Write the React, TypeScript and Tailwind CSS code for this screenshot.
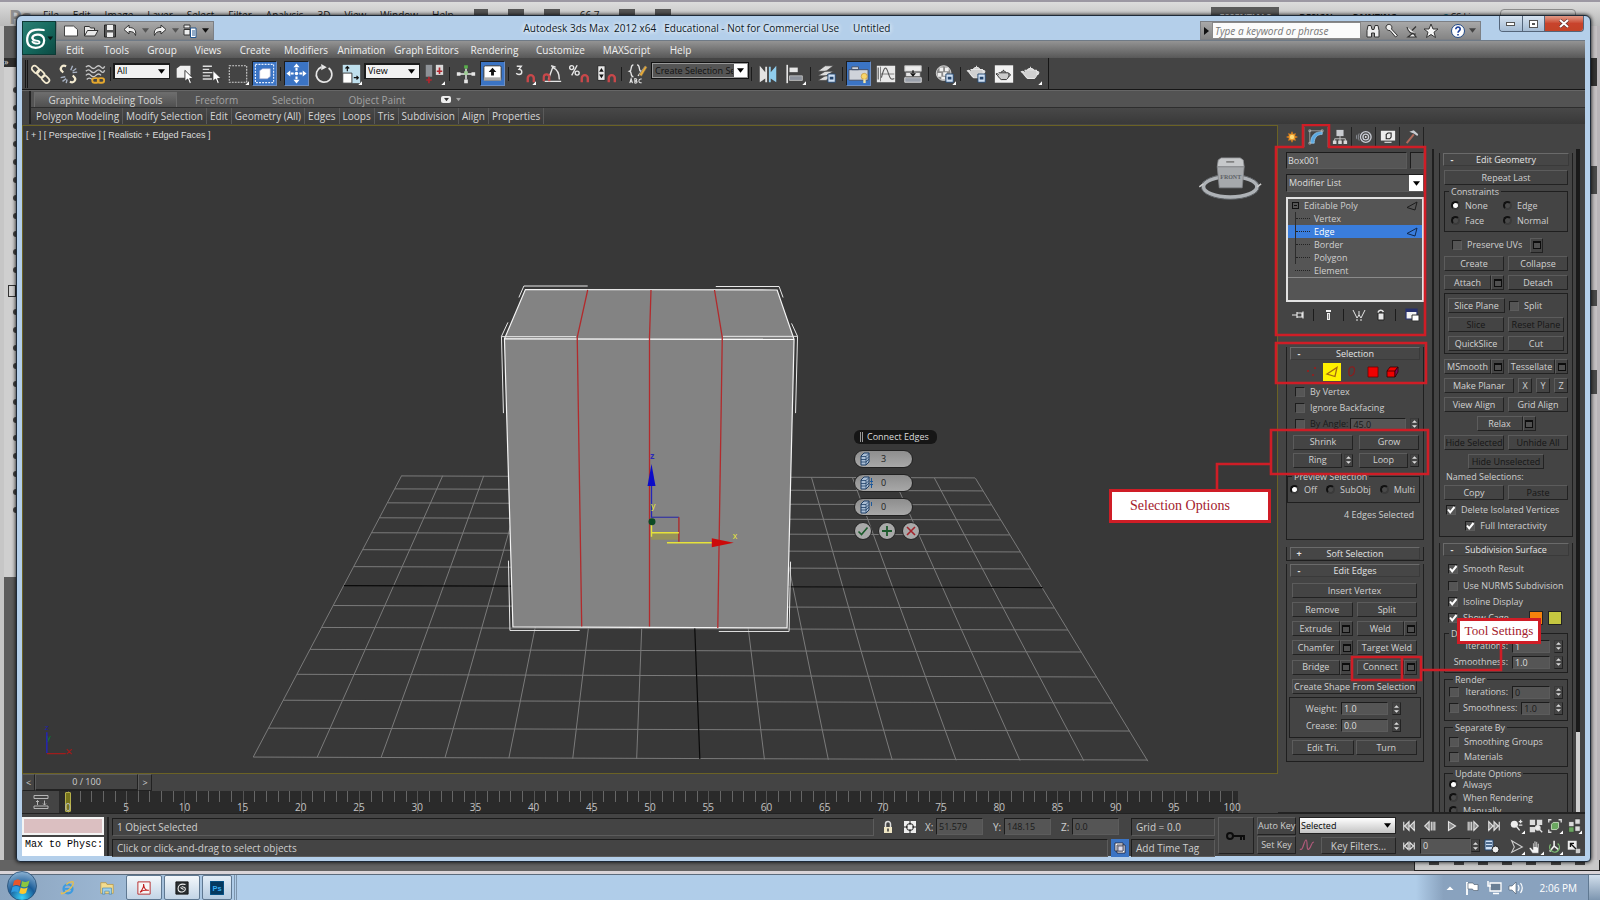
import React from "react";

type Kids = { children?: React.ReactNode; className?: string };

/* ---------- small building blocks ---------- */

function Ico({ children, className = "size-6", box = "0 0 24 24" }: Kids & { box?: string }) {
  return (
    <svg viewBox={box} className={"shrink-0 " + className} fill="none" stroke="#e6e6e6" strokeWidth="1.5" aria-hidden="true">
      {children}
    </svg>
  );
}

function ToolBtn({ label, active, flyout, children }: Kids & { label: string; active?: boolean; flyout?: boolean }) {
  return (
    <button aria-label={label} className="flex h-7 w-[27px] shrink-0 items-center justify-center">
      <span className={active ? "flex size-[25px] items-center justify-center border border-t-[#1d1d1d] border-l-[#1d1d1d] border-r-[#6d8fc4] border-b-[#6d8fc4] bg-[#3b74c4]" : "flex size-[25px] items-center justify-center"}>
        <Ico className={active ? "size-[23px]" : "size-[22px]"}>
          {children}
          {flyout && <path d="M20 24l4-4v4z" fill="#fff" stroke="none" />}
        </Ico>
      </span>
    </button>
  );
}

function Sep() {
  return <span className="mx-[2px] h-3.5 w-px shrink-0 bg-[#1c1c1c]" />;
}

function Caret({ className = "" }: Kids) {
  return (
    <svg viewBox="0 0 8 5" className={"pointer-events-none h-[5px] w-[7px] " + className} aria-hidden="true">
      <path d="M0 0h8L4 5z" fill="currentColor" />
    </svg>
  );
}

function BarSelect({ label, value, className }: { label: string; value: string; className: string }) {
  return (
    <span className={"relative mb-1.5 block h-4 shrink-0 border border-t-2 border-l-2 border-[#1b1b1b] bg-[#f1f1f1] text-black " + className}>
      <select aria-label={label} className="block h-full w-full appearance-none bg-transparent pl-0.5 text-[9px] leading-3 outline-none">
        <option>{value}</option>
      </select>
      <Caret className="absolute top-1 right-1" />
    </span>
  );
}

const raised = "border border-t-[#5c5c5c] border-l-[#5c5c5c] border-r-[#222] border-b-[#222] bg-[#444]";
const sunken = "border border-t-[#1c1c1c] border-l-[#1c1c1c] border-r-[#5c5c5c] border-b-[#5c5c5c] bg-[#555]";

function Btn({ children, className = "flex-1", off }: Kids & { off?: boolean }) {
  return (
    <button disabled={off} className={"h-[15px] min-w-0 text-center leading-3 whitespace-nowrap " + raised + (off ? " text-[#161616] " : " text-[#d2d2d2] ") + className}>
      {children}
    </button>
  );
}

function Opt({ label }: { label: string }) {
  return (
    <button aria-label={label} className={"flex h-[15px] w-[13px] shrink-0 items-center justify-center " + raised}>
      <span className="h-2 w-2 border border-t-2 border-[#0d0d0d] bg-[#505050]" />
    </button>
  );
}

function Spin({ className = "" }: Kids) {
  return (
    <span className={"flex h-[13px] w-[9px] shrink-0 flex-col items-center justify-center gap-[2px] border border-[#3a3a3a] border-r-[#222] border-b-[#222] text-[#ddd] " + className}>
      <svg viewBox="0 0 6 3" className="h-[3px] w-[5px]" aria-hidden="true"><path d="M0 3h6L3 0z" fill="currentColor" /></svg>
      <svg viewBox="0 0 6 3" className="h-[3px] w-[5px]" aria-hidden="true"><path d="M0 0h6L3 3z" fill="currentColor" /></svg>
    </span>
  );
}

function Num({ label, value, className = "w-[38px]", off, id }: { label?: string; value: string; className?: string; off?: boolean; id?: string }) {
  return (
    <input id={id} aria-label={label} defaultValue={value} className={"h-[13px] min-w-0 pl-0.5 text-[9px] leading-3 outline-none " + sunken + (off ? " text-[#1a1a1a] " : " text-[#dedede] ") + className} />
  );
}

function Check({ label, on, dim, className = "" }: { label: string; on?: boolean; dim?: boolean; className?: string }) {
  return (
    <label className={"flex items-center gap-[5px] whitespace-nowrap " + (dim ? "text-[#1a1a1a] " : "") + className}>
      <span className="relative block size-[10px] shrink-0">
        <input type="checkbox" defaultChecked={on} className={"peer block size-[10px] appearance-none " + sunken} />
        <svg viewBox="0 0 10 10" className="pointer-events-none absolute inset-0 hidden size-[10px] peer-checked:block" aria-hidden="true">
          <path d="M2 4.500l2.200 2.800L8.500 2" stroke="#fff" strokeWidth="2" fill="none" />
        </svg>
      </span>
      {label}
    </label>
  );
}

function Radio({ label, name, on, className = "" }: { label: string; name: string; on?: boolean; className?: string }) {
  return (
    <label className={"flex items-center gap-[5px] whitespace-nowrap " + className}>
      <input type="radio" name={name} defaultChecked={on} className="block size-[9px] shrink-0 appearance-none rounded-full border-2 border-t-[#111] border-l-[#111] border-r-[#3a3a3a] border-b-[#3a3a3a] bg-[#4a4a4a] checked:bg-white" />
      {label}
    </label>
  );
}

function Row({ children, className = "h-[19px] gap-1" }: Kids) {
  return <div className={"flex items-center " + className}>{children}</div>;
}

function Rollout({ title, sign = "-", children, className = "" }: Kids & { title: string; sign?: string }) {
  return (
    <section className={"border border-t-0 border-[#1f1f1f] " + className}>
      <button className="mx-[3px] flex h-[13px] w-[calc(100%-6px)] items-center border border-[#6a6a6a] border-r-[#3a3a3a] border-b-[#3a3a3a] bg-[#464646] px-1 text-[9px] leading-3 text-[#e4e4e4]">
        <span className="w-2 font-bold">{sign}</span>
        <span className="flex-1 pr-2 text-center">{title}</span>
      </button>
      {children}
    </section>
  );
}

function Group({ title, children, className = "" }: Kids & { title?: string }) {
  return (
    <fieldset className={"min-w-0 border border-[#1f1f1f] " + className}>
      {title && <legend className="ml-1 h-[9px] px-0.5 leading-[9px]">{title}</legend>}
      {children}
    </fieldset>
  );
}

/* ---------- back window ---------- */

const psMenus = ["File", "Edit", "Image", "Layer", "Select", "Filter", "Analysis", "3D", "View", "Window", "Help"];

function BackWindow() {
  return (
    <div className="absolute inset-0 flex flex-col overflow-hidden border-t-2 border-[#9c98a3] bg-[#636363] text-[#222]">
      <div className="flex h-6 shrink-0 items-start bg-linear-to-b from-[#dcdcdc] to-[#b9b9b9] pt-[7px] pl-[9px] text-[10px] leading-3">
        <span className="-mt-0.5 w-[34px] text-[20px] leading-5 font-bold text-[#8e8e8e]">Ps</span>
        <div className="flex gap-[14px]">
          {psMenus.map((m) => <span key={m}>{m}</span>)}
        </div>
        <div className="ml-5 flex gap-5">
          <span className="h-3 w-3.5 bg-[#555]" />
          <span className="h-3 w-4 bg-[#555]" />
          <span className="h-3 w-4 bg-[#555]" />
          <span>66.7</span>
          <span className="h-3 w-4 bg-[#555]" />
          <span className="h-3 w-4 bg-[#555]" />
        </div>
        <div className="mr-6 ml-auto flex gap-5 font-bold">
          <span className="-mt-0.5 h-4 bg-[#5a5a5a] px-2 text-[9px] leading-5 text-[#eee]">ESSENTIALS</span>
          <span className="text-[9px] leading-4">DESIGN</span>
          <span className="text-[9px] leading-4">PAINTING</span>
          <span className="text-[9px] leading-4">»</span>
          <span className="text-[9px] leading-4 font-normal"><b className="text-[#1e7f96]">C</b> CS Live</span>
          <span className="h-4 w-[76px] rounded border border-[#8a8a8a]" />
        </div>
      </div>
      <div className="flex min-h-0 flex-1">
        <div className="flex w-4 shrink-0 flex-col border-l-4 border-[#c6c6c6] bg-[#5d5d5d]">
          <div className="mt-8 h-[9px] bg-[#2e2e2e] text-[9px] leading-[8px] text-[#ddd]">»</div>
          <div className="flex h-[510px] flex-col items-end gap-3 overflow-hidden bg-[#cfcfcf] pt-5">
            {Array.from({ length: 24 }, (_, i) => (
              <span key={i} className={i === 11 ? "h-3 w-2 shrink-0 border border-[#333]" : "h-1.5 w-[3px] shrink-0 rounded-l bg-[#444]"} />
            ))}
          </div>
        </div>
        <div className="flex-1" />
        <div className="flex w-[9px] shrink-0 flex-col border-r-[3px] border-[#b9b5b8] bg-[#c4c0c2]">
          <div className="mt-8 h-7 bg-[#333]" />
          <div className="mt-20 h-7 bg-[#4a4a4a]" />
          <div className="mt-24 h-4 bg-[#4a4a4a]" />
          <div className="mt-16 h-6 bg-[#4a4a4a]" />
        </div>
      </div>
      <div className="ml-auto flex h-[11px] w-[186px] shrink-0 items-center justify-evenly border-x border-b border-[#222] bg-[#c9c9c9] pb-1">
        {[0, 1, 2, 3, 4, 5, 6].map((i) => <span key={i} className="h-1 w-2.5 bg-[#444]" />)}
      </div>
      <div className="h-[3px] shrink-0 bg-[#d9d4d8]" />
    </div>
  );
}

/* ---------- title, menu ---------- */

function AppLogo() {
  return (
    <button aria-label="Application menu" className="absolute top-[5px] left-[5px] z-10 flex h-[34px] w-[34px] items-center justify-center border border-[#0d3a35] bg-linear-to-br from-[#2c7f74] via-[#156a5f] to-[#0d4a43]">
      <svg viewBox="0 0 34 34" className="size-[34px]" fill="none" stroke="#fff" strokeWidth="2.4" aria-hidden="true">
        <path d="M22 8.500C12 7 5.500 9 4.500 17c-.8 8 4 10.500 9 10.500 6 0 9-3.500 9-8 0-4.500-4-6.500-7.500-6-3 .4-5 1.500-5 3.500" strokeLinecap="round" />
        <path d="M10 17c.5 3.500 3.500 2.500 6 3 2.500.6 2 3-.5 3-2.500 0-4.500-.5-5.500-2" strokeWidth="2" strokeLinecap="round" />
        <path d="M26 15.500h6l-3 4z" fill="#0a1614" stroke="none" />
      </svg>
    </button>
  );
}

function TitleBar() {
  return (
    <div className="relative flex h-6 shrink-0 text-[10px]">
      <div className="mt-[5px] ml-[34px] flex h-[19px] w-[158px] items-center justify-between border border-[#7c7f84] bg-linear-to-b from-[#a8a8a8] to-[#858585] pr-1 pl-1.5">
        <Ico className="size-4" box="0 0 16 16"><path d="M1.500 3h9l4 3.500V13h-13z" fill="#fff" stroke="#444" strokeWidth="1" /></Ico>
        <Ico className="size-4" box="0 0 16 16"><path d="M1.500 13V3.500h5l1 1.500h4v2.500M1.500 13l3-5.500H15L12 13z" fill="#e8e8e8" stroke="#333" strokeWidth="1" /></Ico>
        <Ico className="size-4" box="0 0 16 16"><path d="M2.500 2h11v12h-11z" fill="#555" stroke="#222" strokeWidth="1" /><path d="M5 2h6v5H5zM5 9.500h6V14H5z" fill="#eee" stroke="none" /></Ico>
        <Ico className="size-4" box="0 0 16 16"><path d="M2 6.500L7 2v2.500c5 0 7.500 2.500 6.500 8-1-3-2.500-4-6.500-4V11z" fill="#f0f0f0" stroke="#333" strokeWidth="1" /></Ico>
        <Caret className="text-[#555]" />
        <Ico className="size-4" box="0 0 16 16"><path d="M14 6.500L9 2v2.500c-5 0-7.500 2.500-6.500 8 1-3 2.500-4 6.500-4V11z" fill="#f0f0f0" stroke="#333" strokeWidth="1" /></Ico>
        <Caret className="text-[#555]" />
        <Ico className="size-4" box="0 0 16 16"><path d="M2 2h6v3H2zM2 6.500h6V12H2z" fill="#eee" stroke="#333" strokeWidth="1" /><path d="M8.500 5H14v9.500H8.500z" fill="#fff" stroke="#24568f" strokeWidth="1" /><path d="M10 8h3M10 10h3M10 12h3" stroke="#24568f" strokeWidth="1" /></Ico>
        <Caret className="text-[#111]" />
      </div>
      <h1 className="flex flex-1 items-center justify-center gap-[14px] text-[10px] whitespace-nowrap text-[#0d1a28] [text-shadow:0_0_5px_#fff,0_0_5px_#fff]">
        <span>Autodesk 3ds Max&nbsp; 2012 x64</span>
        <span className="-ml-1.5">Educational - Not for Commercial Use</span>
        <span>Untitled</span>
      </h1>
      <div className="mt-[5px] flex h-[19px] w-[281px] items-center border border-[#7c7f84] bg-linear-to-b from-[#a8a8a8] to-[#858585]">
        <svg viewBox="0 0 5 8" className="mx-[3px] h-2 w-[5px]" aria-hidden="true"><path d="M0 0l5 4-5 4z" fill="#111" /></svg>
        <input aria-label="Search" placeholder="Type a keyword or phrase" className="h-[17px] w-[149px] border border-[#888] bg-[#fbfbfb] px-0.5 text-[10px] italic outline-none placeholder:text-[#777]" />
        <div className="flex flex-1 items-center justify-between pr-1 pl-1">
          <Ico className="size-4" box="0 0 16 16"><path d="M3 2.500h3l1 4h2l1-4h3l1 5V14h-4.500v-4h-3v4H2V7.500z" fill="#eee" stroke="#333" strokeWidth="1" /></Ico>
          <Ico className="size-4" box="0 0 16 16"><path d="M3 2c3-2 6 1 4.500 4l6 6.500-2 1.500L6 7.500C3 8 .5 4.500 3 2z" fill="#eee" stroke="#333" strokeWidth="1" /></Ico>
          <Ico className="size-4" box="0 0 16 16"><path d="M3 4c1 5 4 7 9 7M8 7.500l4-4M4 14h8l-3-4z" fill="#eee" stroke="#333" strokeWidth="1.200" /></Ico>
          <Ico className="size-4" box="0 0 16 16"><path d="M8 1l2 5h5l-4 3.200 1.500 5.300L8 11.500l-4.500 3L5 9.200 1 6h5z" fill="#f4f4f4" stroke="#333" strokeWidth="1" /></Ico>
          <span className="w-1" />
          <Ico className="size-4" box="0 0 16 16"><circle cx="8" cy="8" r="6.500" fill="#fff" stroke="#234a86" strokeWidth="1" /><path d="M5.800 6.200c0-3 4.600-2.700 4.400 0C10 8 8 7.800 8 9.800M8 11v1.600" stroke="#1b3f9a" strokeWidth="1.600" /></Ico>
          <Caret className="text-[#444]" />
        </div>
      </div>
      <div className="mr-[1px] ml-[18px] flex h-4 w-[85px] overflow-hidden rounded-b-[4px] border border-t-0 border-[#54657a] text-white">
        <button aria-label="Minimize" className="flex flex-1 items-center justify-center border-r border-[#54657a] bg-linear-to-b from-[#d5e2f0] to-[#a6bcd4]"><span className="h-1 w-[9px] border border-[#555] bg-white" /></button>
        <button aria-label="Restore" className="flex flex-1 items-center justify-center border-r border-[#54657a] bg-linear-to-b from-[#d5e2f0] to-[#a6bcd4]"><span className="h-2 w-[9px] border border-[#555] bg-white p-[2px]"><span className="block h-full border border-[#555]" /></span></button>
        <button aria-label="Close" className="flex w-[38px] items-center justify-center bg-linear-to-b from-[#e09a88] via-[#c8432c] to-[#c34327]"><svg viewBox="0 0 10 9" className="h-[9px] w-[10px]" aria-hidden="true"><path d="M1 1l8 7M9 1L1 8" stroke="#5b3030" strokeWidth="3.200" /><path d="M1 1l8 7M9 1L1 8" stroke="#fff" strokeWidth="2" /></svg></button>
      </div>
    </div>
  );
}

const menus: [string, string][] = [
  ["Edit", "w-9"], ["Tools", "w-[47px]"], ["Group", "w-11"], ["Views", "w-12"], ["Create", "w-[46px]"], ["Modifiers", "w-14"],
  ["Animation", "w-[55px]"], ["Graph Editors", "w-[75px]"], ["Rendering", "w-[61px]"], ["Customize", "w-[71px]"], ["MAXScript", "w-[61px]"], ["Help", "w-[47px]"],
];

function MenuBar() {
  return (
    <nav className="flex h-[18px] shrink-0 items-center border-t border-[#6f7a86] bg-linear-to-b from-[#949494] to-[#585858] pl-[35px] text-[10px] leading-3 text-[#f0f0f0]">
      {menus.map(([m, w]) => <button key={m} className={"text-center whitespace-nowrap " + w}>{m}</button>)}
    </nav>
  );
}

/* ---------- main toolbar ---------- */

const magnet = <path d="M15 21v-4.500a3.300 3.300 0 016.600 0V21" stroke="#c8484a" strokeWidth="2.600" />;
const teapot = <path d="M5 10h13c2 3 0 7-2.500 9h-7C6 18 4 13 1.500 11.500c2-1.500 3 .5 3.500 1.500M8 9.500c2-2.500 5-2.500 7 0M11.500 7.500V6M18 11.500c3-1 4 2 0 4" fill="#d0d0d0" stroke="#e8e8e8" strokeWidth="1.100" />;

function Toolbar() {
  return (
    <div className="flex h-8 shrink-0 items-center border-b border-[#161616] bg-[#444]">
      <div className="flex h-full w-[1027px] items-center border-r border-[#161616] pl-[5px]">
        <span className="absolute left-[8px] h-7 w-[3px] border-x border-[#161616]" />
        <ToolBtn label="Link"><g stroke="#f3ead0" strokeWidth="1.900"><rect x="1.500" y="4" width="9" height="6" rx="3" transform="rotate(45 6 7)" /><rect x="7" y="9" width="9" height="6" rx="3" transform="rotate(45 12 12)" /><rect x="13" y="14.500" width="9" height="6" rx="3" transform="rotate(45 17 17)" /></g></ToolBtn>
        <ToolBtn label="Unlink"><path d="M10 3.500c-5-2-8 3-4 6l1 .5M14 20.500c5 2 8-3 4-6l-1-.5" stroke="#f3ead0" strokeWidth="2.400" /><path d="M15 8l2-5M17 9l4-3M17 10.500l5-.5M9 15l-5 1M10 17l-4 3M11 18l-1 4" stroke="#a9b3c4" /></ToolBtn>
        <ToolBtn label="Bind to space warp"><path d="M2 4.500q3-3 5.500 0t5.500 0 5.500 0 4-1M2 9q3-3 5.500 0t5.500 0 5.500 0 4-1M2 13.500q3-3 5.500 0t5.500 0 5.500 0M3 18q2.500-3 6 0" stroke="#c9c9c9" /><rect x="9" y="16.500" width="7" height="5" rx="2.500" stroke="#e3a72e" strokeWidth="2" /><rect x="15" y="16.500" width="7" height="5" rx="2.500" stroke="#e3a72e" strokeWidth="2" /></ToolBtn>
        <Sep />
        <BarSelect label="Selection filter" value="All" className="w-[57px]" />
        <ToolBtn label="Select object"><path d="M4 6l4-3h11v10l-3 3H4z" fill="#f0f0f0" stroke="none" /><path d="M13 8v12l3-2.500 2 5 2.200-1-2-4.500h4z" fill="#fff" stroke="#333" strokeWidth="1" /></ToolBtn>
        <ToolBtn label="Select by name"><path d="M3 3.500h10M3 7h7M3 10.500h12M3 14h8M3 17.500h10" stroke="#ddd" /><path d="M14 8v12l3-2.500 2 5 2.200-1-2-4.500h4z" fill="#fff" stroke="#333" strokeWidth="1" /></ToolBtn>
        <ToolBtn label="Selection region" flyout><rect x="2.500" y="3" width="19" height="18" strokeDasharray="2 1.200" stroke="#cfcfcf" strokeWidth="1.200" /></ToolBtn>
        <ToolBtn label="Window crossing" active><rect x="2.500" y="2.500" width="19" height="19" strokeDasharray="2 1.200" stroke="#e6efff" strokeWidth="1.200" /><path d="M7 9l3-2h8v8l-3 2.500H7z" fill="#fff" stroke="#aac" strokeWidth=".6" /></ToolBtn>
        <Sep />
        <ToolBtn label="Move" active><path d="M12 1.500l3.200 4H8.800zM12 22.500l3.200-4H8.800zM1.500 12l4-3.200v6.400zM22.500 12l-4-3.200v6.400z" fill="#fff" stroke="none" /><path d="M12 6v3M12 15v3M6 12h3M15 12h3" strokeWidth="2.200" stroke="#fff" /><circle cx="12" cy="12" r="1.800" fill="#fff" stroke="none" /></ToolBtn>
        <ToolBtn label="Rotate"><path d="M9 4.500a8.500 8.500 0 108 1" strokeWidth="1.800" /><path d="M9 1l6 3.500-6 3.500z" fill="#e6e6e6" stroke="none" /></ToolBtn>
        <ToolBtn label="Scale" flyout><path d="M3 2h19v20H3z" fill="#bfe0ee" stroke="none" /><path d="M3 11h10v11H3z" fill="#fff" stroke="#333" strokeWidth="1" /><path d="M8 9V4M6 6l2-2 2 2M15 16h5M18 14l2 2-2 2" stroke="#111" strokeWidth="1.300" /></ToolBtn>
        <BarSelect label="Reference coordinate system" value="View" className="w-14" />
        <ToolBtn label="Pivot center" flyout><path d="M3 2h7v13H3z" fill="#8e9297" stroke="none" /><path d="M14 2h8v11h-8z" fill="#d9d9d9" stroke="none" /><path d="M6.500 15v7M3.500 18.500h6M18 5v7M15 9h6" stroke="#b3262e" strokeWidth="1.800" /></ToolBtn>
        <Sep />
        <ToolBtn label="Manipulate"><path d="M12 6v12M5 12h14" strokeWidth="1.600" /><path d="M10 2.500h4v3.500h-4z" fill="#58b04a" stroke="none" /><path d="M2 10h4v4H2zM18 10h4v4h-4zM10 18h4v4h-4z" fill="#e6e6e6" stroke="none" /><path d="M10 9h4v4h-4z" fill="#9fce96" stroke="none" /></ToolBtn>
        <ToolBtn label="Keyboard override" active><rect x="3" y="4" width="18" height="15" rx="1.500" fill="#fff" stroke="#333" strokeWidth="1" /><path d="M3 16h18v3.500H3z" fill="#aaa" stroke="none" /><path d="M12 6l4 4.500h-2.500V14h-3v-3.500H8z" fill="#111" stroke="none" /></ToolBtn>
        <Sep />
        <ToolBtn label="Snaps toggle" flyout><path d="M3 3.500h5L5.500 7c4 0 4 5.500 0 5.500-1.500 0-2.500-.5-3-1.500" />{magnet}</ToolBtn>
        <ToolBtn label="Angle snap"><path d="M8 18L13 4M4 20h18M13 5c5 2 7 7 7 13M11 3l5 1.500" /><path d="M3 20v-4.500a3 3 0 016 0V20" stroke="#c8484a" strokeWidth="2.400" /></ToolBtn>
        <ToolBtn label="Percent snap"><circle cx="4" cy="5" r="2.200" /><circle cx="10" cy="11" r="2.200" /><path d="M10 2.500L4 13.500" />{magnet}</ToolBtn>
        <ToolBtn label="Spinner snap"><path d="M3 3h8v16H3z" fill="#e8e8e8" stroke="#222" strokeWidth="1" /><path d="M4.500 9.500h5L7 5.500zM4.500 12.500h5L7 16.500z" fill="#111" stroke="none" />{magnet}</ToolBtn>
        <Sep />
        <ToolBtn label="Named selection sets"><path d="M7 2C3 2 6 8 3 9c3 1 0 6 4 6M11 2c4 0 1 6 4 7M12 14l8-10" /><path d="M13 13l7-10 2 1.500-6 10z" fill="#e4a93a" stroke="#555" strokeWidth=".6" /><path d="M3 22l1.500-5L6 22M3.500 20.500h2M8.500 22v-5c3 0 3 2.500 0 2.500 3.500 0 3.500 2.500 0 2.500M16 17.500c-4-1-4 5 0 4" strokeWidth="1.100" /></ToolBtn>
        <span className="relative mb-1.5 block h-[17px] w-[98px] shrink-0 border border-[#111] bg-[#555] outline outline-[#999] -outline-offset-2">
          <input aria-label="Named selection" defaultValue="Create Selection Se" className="block h-full w-[81px] bg-transparent pl-[3px] text-[9px] text-[#111] outline-none" />
          <button aria-label="Open named selections" className="absolute top-px right-px flex h-[13px] w-[13px] items-center justify-center bg-white text-black"><Caret /></button>
        </span>
        <Sep />
        <ToolBtn label="Mirror"><path d="M3 3l6 7V4h2v17H9v-4l-6 4z" fill="#e3e3e3" stroke="none" /><path d="M21 3l-6 7V4h-2v17h2v-4l6 4z" fill="#8fcdee" stroke="none" /></ToolBtn>
        <ToolBtn label="Align" flyout><path d="M3.500 2v20" strokeWidth="1.800" /><path d="M6 5h9v5H6z" fill="#e6e6e6" stroke="none" /><path d="M6 14h14v5H6z" fill="#8d929c" stroke="#bbb" strokeWidth="1" /></ToolBtn>
        <Sep />
        <ToolBtn label="Layer manager"><path d="M2 9l8-6h9l-8 6zM2 14l8-5h9l-8 5zM2 19l8-5h7l-6 5z" fill="#dcdcdc" stroke="#444" strokeWidth=".8" /><path d="M13 12h8v9h-8z" fill="#cfe0f4" stroke="#24466e" strokeWidth="1" /><path d="M15 15h4v3h-4z" fill="#24466e" stroke="none" /></ToolBtn>
        <Sep />
        <ToolBtn label="Graphite tools" active><path d="M2 8h20v11H2zM5 5h7v3H5z" fill="#cfd3da" stroke="#44506a" strokeWidth="1" /><circle cx="18" cy="15" r="3.200" fill="#f7d46a" stroke="#b9862a" strokeWidth=".6" /><path d="M17 18h2.500v4H17z" fill="#f7e6a8" stroke="none" /></ToolBtn>
        <ToolBtn label="Curve editor"><path d="M2 3h20v18H2z" fill="#e9e9e9" stroke="none" /><path d="M6 4v16M6 12h15" stroke="#777" strokeWidth="1" /><path d="M7 16C10 3 12 3 14.500 11s4 7 6.500 6M3.500 5v13" stroke="#555" strokeWidth="1.200" /></ToolBtn>
        <ToolBtn label="Schematic view"><path d="M3 3h18v6H3z" fill="#ececec" stroke="#bbb" strokeWidth="1" /><path d="M3 16h18v5H3z" fill="#9aa0aa" stroke="#ddd" strokeWidth="1" /><path d="M4 10h16v5H4z" fill="#e4e4e4" stroke="#555" strokeWidth="1" /><path d="M12 8v5M9.500 11l2.500 3 2.500-3" stroke="#111" strokeWidth="1.400" /></ToolBtn>
        <Sep />
        <ToolBtn label="Material editor" flyout><circle cx="10.500" cy="11" r="8" fill="#8a8a8a" stroke="#ddd" strokeWidth="1" /><path d="M6 5h4v4H6zM12 5h4v4h-4zM4 11h4v4H4zM10 10h4v4h-4zM8 15h4v3H8z" fill="#f0f0f0" stroke="none" /><path d="M13 12h8v9h-8z" fill="#cfe0f4" stroke="#24466e" strokeWidth="1" /><path d="M15 15h4v3h-4z" fill="#24466e" stroke="none" /></ToolBtn>
        <Sep />
        <ToolBtn label="Render setup"><g transform="translate(0 -3)">{teapot}</g><path d="M13 12h8v9h-8z" fill="#cfe0f4" stroke="#24466e" strokeWidth="1" /><path d="M15 15h4v3h-4z" fill="#24466e" stroke="none" /></ToolBtn>
        <ToolBtn label="Rendered frame"><path d="M2 2.500h20v19H2z" fill="#f2f2f2" stroke="none" /><g transform="translate(2 2.500) scale(.82)"><path d="M5 10h13c2 3 0 7-2.500 9h-7C6 18 4 13 1.500 11.500c2-1.500 3 .5 3.500 1.500M8 9.500c2-2.500 5-2.500 7 0M11.500 7.500V6M18 11.500c3-1 4 2 0 4" fill="#ccc" stroke="#333" strokeWidth="1.300" /></g></ToolBtn>
        <ToolBtn label="Render" flyout><g transform="translate(0 -2)">{teapot}</g></ToolBtn>
      </div>
    </div>
  );
}

/* ---------- ribbon ---------- */

const ribbon = ["Polygon Modeling", "Modify Selection", "Edit", "Geometry (All)", "Edges", "Loops", "Tris", "Subdivision", "Align", "Properties"];

function Ribbon() {
  return (
    <div className="flex h-[34px] shrink-0 border-t border-[#666] bg-[#535353]">
      <div className="w-[9px] shrink-0 border-r-2 border-[#222] bg-[#444]" />
      <div className="min-w-0 flex-1">
        <div className="flex h-4 items-end text-[10px] leading-3 text-[#a2a2a2]">
          <button className="ml-[3px] h-[15px] w-[143px] border border-b-0 border-[#6c6c6c] bg-linear-to-b from-[#6d6d6d] to-[#505050] text-[#d6d6d6]">Graphite Modeling Tools</button>
          <button className="ml-[18px] h-[15px] w-[42px]">Freeform</button>
          <button className="ml-[35px] h-[15px] w-[42px]">Selection</button>
          <button className="ml-[31px] h-[15px] w-[64px] whitespace-nowrap">Object Paint</button>
          <button aria-label="Minimize ribbon" className="mb-1 ml-[32px] flex items-center gap-1"><span className="flex h-[7px] w-[10px] items-center justify-center rounded-[2px] bg-[#eee] text-[#333]"><Caret className="scale-75" /></span><Caret className="scale-75" /></button>
        </div>
        <div className="flex h-[17px] items-center border-t border-[#2e2e2e] bg-linear-to-b from-[#484848] to-[#393939] pl-0.5 text-[10px] leading-3 text-[#d6d6d6]">
          {ribbon.map((r) => <button key={r} className="h-full border-r border-[#5a5a5a] px-[3px] pb-px whitespace-nowrap">{r}</button>)}
        </div>
      </div>
    </div>
  );
}

/* ---------- viewport ---------- */

const rows = [476, 489, 503, 518, 533, 550, 567, 586, 606, 628, 650, 675, 701, 729, 758];

function Scene() {
  const steps = Array.from({ length: 15 }, (_, i) => i);
  return (
    <svg viewBox="23 125 1254 649" className="absolute inset-0 h-full w-full" fill="none" aria-hidden="true">
      <g stroke="#7a7a7a" strokeWidth="1">
        {steps.filter((i) => i !== 7).map((i) => <path key={i} d={`M${401 + i * 41.1} ${475.500 + i * 0.2}L${252 + i * 64.1} ${758 + i * 0.3}`} />)}
        {rows.filter((_, i) => i !== 7).map((y) => {
          const t = (y - 476) / 282;
          return <path key={y} d={`M${401 - 149 * t} ${y}L${976 + 173 * t} ${y + 2 + t}`} />;
        })}
      </g>
      <path d="M343 586L1044 588M689 477L700 760" stroke="#0a0a0a" strokeWidth="1.200" />
      <path d="M525 289L777.500 289.500 794.500 339 787.500 628.500 512.500 627.500 504 338.500z" fill="#838383" stroke="#f4f4f4" strokeWidth="1.200" />
      <path d="M504 338.500L794.500 339" stroke="#fff" strokeWidth="1.200" />
      <path d="M518.500 297L523.500 285.500H587.500M716 286H779.500L783.500 297M507.500 322L501 336 503 413M501 336.300H576M792 323L798 336 796 413M723 336H798M508 561L509.500 631H579.500M791 562L789.500 632H719" stroke="#e8e8e8" strokeWidth="1" />
      <path d="M587.500 289.500L577 337 581.500 627M651 289.500L649.500 337V627M714.700 289.500L722.500 337 718 628.500" stroke="#b22a2c" strokeWidth="1.300" />
      <path d="M651 540h28v-7h-28z" fill="#96925c" />
      <path d="M651.500 518V486" stroke="#2326b8" strokeWidth="1.300" />
      <path d="M652 517.500h27" stroke="#3a3aa0" strokeWidth="1.300" />
      <path d="M679 517.500V542" stroke="#b02626" strokeWidth="1.300" />
      <path d="M651.500 522V537M652 533h27M667 543h45" stroke="#e6e23a" strokeWidth="1.400" />
      <path d="M651.500 464l4 22h-8z" fill="#0c0cc8" />
      <path d="M734 543l-22-4.500v9z" fill="#cc0a0a" />
      <circle cx="652" cy="522" r="3.500" fill="#0c4a24" />
      <g fontFamily="'Liberation Sans', sans-serif" fontSize="9">
        <text x="650" y="459" fill="#2a2ab8" fontWeight="700">z</text>
        <text x="651" y="509" fill="#e6e23a">y</text>
        <text x="733" y="539" fill="#e6e23a">x</text>
        <text x="43" y="731" fill="#2222a0" fontSize="8">z</text>
        <text x="45" y="741" fill="#137a2e" fontSize="8">y</text>
      </g>
      <path d="M45 754V733" stroke="#2222c8" strokeWidth="1.300" />
      <path d="M45 754.500H64M65 750l5 5M70 750l-5 5" stroke="#a01c1c" strokeWidth="1.200" />
      <g>
        <ellipse cx="1232" cy="186" rx="27" ry="10.500" stroke="#aeb2b6" strokeWidth="4" />
        <ellipse cx="1232" cy="186" rx="29" ry="12.500" stroke="#5b5f63" strokeWidth="1" />
        <path d="M1201 186l4-3M1259 186l4-3" stroke="#ccc" strokeWidth="1.500" />
        <path d="M1220 159l3-2h19l3 2 1 7h-27z" fill="#c6c8ca" stroke="#8f9295" strokeWidth=".8" />
        <path d="M1219 166h27l-2 21h-23z" fill="#a6a9ac" stroke="#84878a" strokeWidth=".8" />
        <text x="1232.500" y="178" fill="#5c6064" fontSize="6" fontWeight="700" textAnchor="middle" fontFamily="'Liberation Serif', serif">FRONT</text>
        <path d="M1228 161h8" stroke="#777" strokeWidth="1.500" />
      </g>
    </svg>
  );
}

function Caddy() {
  return (
    <div className="absolute top-[304px] left-[831px] flex flex-col items-start text-[9px] text-[#333]">
      <div className="mb-1.5 flex h-[14px] items-center gap-1 rounded-md bg-[#161616] pr-2 pl-1.5 text-[9px] leading-3 text-[#dcdcdc]"><span className="h-2.5 w-[3px] border-x border-[#999]" />Connect Edges</div>
      {["3", "0", "0"].map((v, i) => (
        <div key={i} className="mb-1.5 flex h-[18px] w-[59px] items-center gap-2 rounded-full border border-[#222] bg-linear-to-b from-[#8e8e8e] to-[#a8a8a8] pl-1">
          <Ico className="size-3.5" box="0 0 14 14"><path d="M2 4l3-3h5v9l-3 3H2z" fill="#a9bdd4" stroke="#1e3f66" strokeWidth="1" /><path d="M2 4.500h5l3-3M7 4.500V13M2 7.500h5l3-3M2 10h5l3-3" stroke="#1e3f66" strokeWidth=".8" />{i > 0 && <path d={i === 1 ? "M12.500 2v4M12.500 8v4M11 5l1.500 1.500L14 5M11 9l1.500-1.500L14 9" : "M12.500 2v4"} stroke="#1e5a9c" strokeWidth="1" />}</Ico>
          <input aria-label={["Segments", "Pinch", "Slide"][i]} defaultValue={v} className="w-5 bg-transparent text-[9px] text-[#1d1d1d] outline-none" />
        </div>
      ))}
      <div className="flex gap-[6px]">
        <button aria-label="OK" className="size-[18px] rounded-full border border-[#222] bg-[#a9a9a9]"><svg viewBox="0 0 16 16" className="size-4" aria-hidden="true"><path d="M3.500 8.500l3 3 6-7" stroke="#1c5a2c" strokeWidth="1.600" fill="none" /></svg></button>
        <button aria-label="Apply and continue" className="size-[18px] rounded-full border border-[#222] bg-[#a9a9a9]"><svg viewBox="0 0 16 16" className="size-4" aria-hidden="true"><path d="M8 3v10M3 8h10" stroke="#1c5a2c" strokeWidth="1.800" /></svg></button>
        <button aria-label="Cancel" className="size-[18px] rounded-full border border-[#222] bg-[#a9a9a9]"><svg viewBox="0 0 16 16" className="size-4" aria-hidden="true"><path d="M4 4l8 8M12 4l-8 8" stroke="#a3222a" strokeWidth="1.600" /></svg></button>
      </div>
    </div>
  );
}

function Timeline() {
  return (
    <>
      <div className="flex h-[17px] shrink-0 items-stretch text-[9px] leading-3 text-[#cfcfcf]">
        <button aria-label="Previous frame" className={"w-[13px] " + raised}>&lt;</button>
        <button className={"w-[103px] border-b-2 text-center " + raised}>0 / 100</button>
        <button aria-label="Next frame" className={"w-[14px] " + raised}>&gt;</button>
      </div>
      <div className="flex h-[22px] shrink-0 pr-[40px]">
        <button aria-label="Open mini curve editor" className="flex w-[37px] items-center justify-center"><Ico className="h-4 w-4" box="0 0 16 16"><path d="M1 1.500h14v3H1zM1 12h14v2.500H1zM4.500 11V6.500M3 8l1.500-1.500L6 8M11.500 6.500V11M10 9.500l1.500 1.500L13 9.500" stroke="#b5b5b5" strokeWidth="1" /></Ico></button>
        <div className="flex flex-1 bg-[#2a2a2a] pl-[9px]">
          {Array.from({ length: 101 }, (_, i) => (
            <span key={i} className={i === 100 ? "relative w-[6px] shrink-0" : "relative min-w-0 flex-1"}>
              {i === 0 && <span className="absolute top-[1px] -left-[3px] h-5 w-[6px] rounded-[1px] border border-[#b5b04a] bg-[#77741c]" />}
              <span className={i % 5 === 0 ? "block h-[22px] w-px bg-[#555]" : "block h-[11px] w-px bg-[#666]"} />
              {i % 5 === 0 && <span className="absolute bottom-0 left-0 w-6 -translate-x-1/2 text-center text-[10px] leading-3 text-[#c4c4c4]">{i}</span>}
            </span>
          ))}
        </div>
      </div>
    </>
  );
}

/* ---------- command panel ---------- */

const wedge = <path d="M1 7.500L11 2 9 10z" strokeWidth="1" />;

function ColumnA() {
  const bar = <span className="h-3 w-px bg-[#1c1c1c]" />;
  return (
    <div className="w-[146px] shrink-0 pl-[2px]">
      <div className="flex h-[23px] items-center pt-[3px]">
        {["Create", "Modify", "Hierarchy", "Motion", "Display", "Utilities"].map((t, i) => (
          <button key={t} aria-label={t} className={i === 1 ? "flex h-5 w-6 items-center justify-center border-x border-[#5c5c5c]" : "flex h-5 w-6 items-center justify-center border-r border-[#222]"}>
            <Ico className="size-4" box="0 0 18 18">
              {i === 0 && <><path d="M9 3v12M3 9h12M5 5l8 8M13 5l-8 8" stroke="#d87a1a" strokeWidth="1.600" /><circle cx="9" cy="9" r="3.200" fill="#ffd873" stroke="#e8962a" /></>}
              {i === 1 && <><path d="M3 16C3 7 8 3 16 3v3C10 6 7 10 7 16z" fill="#5aa8e0" stroke="#9fd0f2" strokeWidth=".8" /><path d="M2 2v14M2 2h14M1 1h2v2H1zM1 15h2v2H1zM15 1h2v2h-2z" stroke="#bbb" strokeWidth=".8" /></>}
              {i === 2 && <><path d="M5 1h8v7H5z" fill="#c9cbd0" stroke="none" /><path d="M9 8v3M3 14v-3h12v3M9 11v3" stroke="#ccc" strokeWidth="1" /><path d="M1 13h4v4H1zM7 13h4v4H7zM13 13h4v4h-4z" fill="#d8d8d8" stroke="none" /></>}
              {i === 3 && <><circle cx="11" cy="9" r="6" stroke="#c9ccd4" /><circle cx="11" cy="9" r="3.200" stroke="#c9ccd4" /><circle cx="11" cy="9" r="1" fill="#eee" stroke="none" /><path d="M3.500 5q-2 4 0 8M1 6.500q-1 2.500 0 5" stroke="#8f939b" strokeWidth="1" /></>}
              {i === 4 && <><path d="M1 2h16v11H1z" fill="#ededed" stroke="none" /><path d="M5 15h8" stroke="#ccc" /><path d="M7 6l2-1.500h3.500V9L11 11H7z" stroke="#222" strokeWidth="1.200" /></>}
              {i === 5 && <><path d="M3 16L11 6" stroke="#b06a5c" strokeWidth="2.200" /><path d="M6 3l5-1.500 5 4.500-1 2-4-3z" fill="#c9cdd2" stroke="none" /></>}
            </Ico>
          </button>
        ))}
      </div>
      <div className="pl-[6px]">
        <div className="mt-[5px] flex gap-[3px]">
          <input aria-label="Object name" defaultValue="Box001" className={"h-[17px] w-0 flex-1 pl-px text-[9px] text-[#dedede] outline-none " + sunken} />
          <button aria-label="Object color" className={"h-[17px] w-[14px] " + sunken} />
        </div>
        <div className={"relative mt-[5px] h-[18px] " + sunken}>
          <select aria-label="Modifier list" className="block h-full w-full appearance-none bg-transparent pl-0.5 text-[9px] text-[#dedede] outline-none"><option>Modifier List</option></select>
          <span className="pointer-events-none absolute inset-y-0 right-0 flex w-[14px] items-center justify-center bg-white text-black"><Caret /></span>
        </div>
        <div className="mt-[5px] h-[105px] border-2 border-[#e2e2e2] bg-[#555]">
          <div className="flex h-[13px] items-center gap-[5px] pl-1"><span className="flex size-[7px] items-center justify-center border border-[#111]"><span className="h-px w-[3px] bg-[#111]" /></span><span className="flex-1">Editable Poly</span><Ico className="mr-1 size-3" box="0 0 12 12"><g stroke="#1c1c1c">{wedge}</g></Ico></div>
          {["Vertex", "Edge", "Border", "Polygon", "Element"].map((t) => (
            <div key={t} className={t === "Edge" ? "flex h-[13px] items-center bg-[#3a7ddc] pl-[7px] text-white" : "flex h-[13px] items-center pl-[7px]"}>
              <span className={t === "Element" ? "h-px w-[15px] self-center border-t border-dotted border-[#222]" : "flex h-full w-[15px] items-center border-l border-[#2c2c2c]"}><span className="w-full border-t border-dotted border-[#222]" /></span>
              <span className="flex-1 pl-1">{t}</span>
              {t === "Edge" && <Ico className="mr-1 size-3" box="0 0 12 12"><g stroke="#10284c">{wedge}</g></Ico>}
            </div>
          ))}
          <div className="border-t border-[#8a8a8a]" />
        </div>
        <div className="mt-1 flex h-[18px] items-center justify-between px-1 pl-[5px]">
          <Ico className="size-3.5" box="0 0 14 14"><path d="M1 7h5M6 4v6M6 5h5v4H6M12 3.500v7" strokeWidth="1.200" /></Ico>{bar}
          <Ico className="size-3.5" box="0 0 14 14"><path d="M5 2h5v2H5zM6 5h3v7H6z" fill="#eee" stroke="none" /><path d="M7.500 6v5" stroke="#888" strokeWidth="1" /></Ico>{bar}
          <Ico className="size-3.5" box="0 0 14 14"><path d="M1 2l4 8 2-3M13 2L9 10 7 7M7 3v5M4 12h2M8 12h2" strokeWidth="1" /></Ico>
          <Ico className="size-3.5" box="0 0 14 14"><path d="M4 5h6v7H4z" fill="#e6e6e6" stroke="#222" strokeWidth="1" /><path d="M4 4.500c1-3 4-3 5.500-.5" /></Ico>{bar}
          <Ico className="size-4" box="0 0 16 16"><path d="M2 2h11v10H2z" fill="#f2f2f2" stroke="#26306e" strokeWidth="1.200" /><path d="M2 2h11v3H2z" fill="#26306e" stroke="none" /><path d="M8 8h7v6H8z" fill="#fff" stroke="#333" strokeWidth="1" /></Ico>
        </div>

        <Rollout title="Selection" className="mt-[23px] pb-[16px]">
          <div className="mt-[3px] flex h-[18px] items-center gap-[2px] pl-[16px]">
            <Ico className="size-[18px]" box="0 0 18 18"><path d="M4 8h2M11 5h2M9 12h2" stroke="#a01818" strokeWidth="1.500" /></Ico>
            <button aria-label="Edge level" className="size-[18px] bg-[#fff000]"><Ico className="size-[18px]" box="0 0 18 18"><path d="M4 11L14 4.500l-2 9z" stroke="#a36a12" strokeWidth="1.300" /></Ico></button>
            <Ico className="size-[18px]" box="0 0 18 18"><path d="M8 4c4-1 4 3 3 6s-5 4-5 1-1-6 2-7z" stroke="#8c1c1c" strokeWidth="1.200" /></Ico>
            <Ico className="size-[18px]" box="0 0 18 18"><path d="M5 4h10v10H5z" fill="#f00000" stroke="#6c0000" strokeWidth=".8" /></Ico>
            <Ico className="size-[18px]" box="0 0 18 18"><path d="M4 8l3-4h8l-3 4v6H4z" fill="#f00000" stroke="#300" strokeWidth=".8" /><path d="M12 8l3-4v5l-3 5z" fill="#7a0a5a" stroke="#300" strokeWidth=".8" /><path d="M4 8h8" stroke="#300" strokeWidth=".8" /></Ico>
          </div>
          <div className="mt-[3px] pl-2">
            <Row className="h-4"><Check label="By Vertex" /></Row>
            <Row className="h-4"><Check label="Ignore Backfacing" /></Row>
            <Row className="h-4 gap-0.5"><Check label="By Angle:" dim /><Num label="Angle" value="45.0" off className="w-[56px]" /><Spin className="ml-0.5" /></Row>
          </div>
          <div className="mt-px pr-[4px] pl-[6px]">
            <Row className="h-[18px] gap-[6px]"><Btn>Shrink</Btn><Btn>Grow</Btn></Row>
            <Row className="h-[18px] gap-[2px]"><Btn>Ring</Btn><Spin className="mr-1" /><Btn>Loop</Btn><Spin /></Row>
          </div>
          <Group title="Preview Selection" className="mt-[3px] mr-[3px] h-[31px]">
            <Row className="h-4 justify-between pt-px pr-1 pl-0.5"><Radio name="preview" label="Off" on /><Radio name="preview" label="SubObj" /><Radio name="preview" label="Multi" /></Row>
          </Group>
          <div className="mt-1 h-4 pr-[9px] text-right leading-4">4 Edges Selected</div>
        </Rollout>
        <Rollout title="Soft Selection" sign="+" className="mt-[7px]" />
        <Rollout title="Edit Edges" className="mt-[3px] pb-1">
          <div className="mt-[4px] pr-[6px] pl-[5px]">
            <Row><Btn>Insert Vertex</Btn></Row>
            <Row><Btn>Remove</Btn><Btn>Split</Btn></Row>
            <Row className="h-[19px]"><Btn>Extrude</Btn><Opt label="Extrude settings" /><Btn className="ml-1 flex-1">Weld</Btn><Opt label="Weld settings" /></Row>
            <Row className="h-[19px]"><Btn>Chamfer</Btn><Opt label="Chamfer settings" /><Btn className="ml-1 w-[60px]">Target Weld</Btn></Row>
            <Row className="h-[20px]"><Btn>Bridge</Btn><Opt label="Bridge settings" /><Btn className="ml-1 flex-1">Connect</Btn><Opt label="Connect settings" /></Row>
            <Row><Btn>Create Shape From Selection</Btn></Row>
          </div>
          <Group className="mx-[2px] mt-px h-[41px] pt-[2px]">
            <Row className="h-[17px] gap-1"><label htmlFor="weight" className="w-[47px] text-right">Weight:</label><Num id="weight" value="1.0" className="w-[47px]" /><Spin /></Row>
            <Row className="h-[17px] gap-1"><label htmlFor="crease" className="w-[47px] text-right">Crease:</label><Num id="crease" value="0.0" className="w-[47px]" /><Spin /></Row>
          </Group>
          <Row className="h-[19px] gap-[2px] pr-[6px] pl-[5px]"><Btn>Edit Tri.</Btn><Btn>Turn</Btn></Row>
        </Rollout>
      </div>
    </div>
  );
}

function ColumnB() {
  return (
    <div className="mt-[25px] w-[143px] shrink-0 border-l-2 border-[#1f1f1f] pr-0.5 pl-[5px]">
      <Rollout title="Edit Geometry" className="mt-[4px] pb-[2px]">
        <div className="px-[4px] pt-[2px]">
          <Row><Btn>Repeat Last</Btn></Row>
          <Group title="Constraints" className="h-[45px]">
            <div className="grid grid-cols-2 pt-0.5 pl-1.5">
              <Row className="h-[15px]"><Radio name="constraint" label="None" on /></Row><Row className="h-[15px]"><Radio name="constraint" label="Edge" className="-ml-1.5" /></Row>
              <Row className="h-[15px]"><Radio name="constraint" label="Face" /></Row><Row className="h-[15px]"><Radio name="constraint" label="Normal" className="-ml-1.5" /></Row>
            </div>
          </Group>
          <Row className="mt-[5px] h-4 gap-2 pl-2"><Check label="Preserve UVs" /><Opt label="Preserve UVs settings" /></Row>
          <Row className="mt-px h-[19px] gap-1"><Btn>Create</Btn><Btn>Collapse</Btn></Row>
          <Row className="h-[19px]"><Btn>Attach</Btn><Opt label="Attach list" /><Btn className="ml-1 w-[60px]">Detach</Btn></Row>
          <Group className="mt-px h-[61px] px-[3px] pt-0.5">
            <Row><Btn>Slice Plane</Btn><Check label="Split" className="flex-1" /></Row>
            <Row><Btn off>Slice</Btn><Btn off>Reset Plane</Btn></Row>
            <Row><Btn>QuickSlice</Btn><Btn>Cut</Btn></Row>
          </Group>
          <div className="h-[3px]" />
          <Row className="h-[19px]"><Btn>MSmooth</Btn><Opt label="MSmooth settings" /><Btn className="ml-1 flex-1">Tessellate</Btn><Opt label="Tessellate settings" /></Row>
          <Row><Btn>Make Planar</Btn><Btn className="w-[14px]">X</Btn><Btn className="w-[14px]">Y</Btn><Btn className="w-[14px]">Z</Btn></Row>
          <Row><Btn>View Align</Btn><Btn>Grid Align</Btn></Row>
          <Row className="h-[19px] justify-center"><Btn className="w-[46px]">Relax</Btn><Opt label="Relax settings" /></Row>
          <Row><Btn off>Hide Selected</Btn><Btn off>Unhide All</Btn></Row>
          <Row className="h-[19px] justify-center"><Btn off className="w-[76px]">Hide Unselected</Btn></Row>
          <Row className="h-3 pl-0.5">Named Selections:</Row>
          <Row><Btn>Copy</Btn><Btn off>Paste</Btn></Row>
          <Row className="h-[15px] pl-0.5"><Check label="Delete Isolated Vertices" on /></Row>
          <Row className="h-[17px] justify-center"><Check label="Full Interactivity" on /></Row>
        </div>
      </Rollout>
      <Rollout title="Subdivision Surface" className="mt-[6px]">
        <div className="px-[4px] pt-[5px]">
          <div className="pl-1">
            <Row className="h-4"><Check label="Smooth Result" on /></Row>
            <Row className="h-[17px]"><Check label="Use NURMS Subdivision" /></Row>
            <Row className="h-4"><Check label="Isoline Display" on /></Row>
            <Row className="h-4 justify-between pr-1.5"><Check label="Show Cage" on /><span className="flex gap-[5px]"><span className="size-3.5 border border-[#222] bg-[#f5820c]" /><span className="size-3.5 border border-[#222] bg-[#c5c740]" /></span></Row>
          </div>
          <Group title="Display" className="mt-[3px] h-11 pr-1">
            <Row className="h-4 justify-end gap-1"><label htmlFor="di">Iterations:</label><Num id="di" value="1" /><Spin /></Row>
            <Row className="h-4 justify-end gap-1"><label htmlFor="ds">Smoothness:</label><Num id="ds" value="1.0" /><Spin /></Row>
          </Group>
          <Group title="Render" className="mt-0.5 h-[46px] pr-1 pl-1">
            <Row className="h-4 gap-1"><Check label="" /><label htmlFor="ri" className="flex-1 text-right">Iterations:</label><Num id="ri" value="0" off /><Spin /></Row>
            <Row className="h-4 gap-1"><Check label="" /><label htmlFor="rs" className="flex-1 text-right">Smoothness:</label><Num id="rs" value="1.0" off /><Spin /></Row>
          </Group>
          <Group title="Separate By" className="mt-0.5 h-11 pt-0.5 pl-1">
            <Row className="h-[15px]"><Check label="Smoothing Groups" /></Row>
            <Row className="h-[15px]"><Check label="Materials" /></Row>
          </Group>
          <Group title="Update Options" className="mt-0.5 h-[60px] pl-1">
            <Row className="h-[13px]"><Radio name="update" label="Always" on /></Row>
            <Row className="h-[13px]"><Radio name="update" label="When Rendering" /></Row>
            <Row className="h-[13px]"><Radio name="update" label="Manually" /></Row>
          </Group>
        </div>
      </Rollout>
    </div>
  );
}

function Notes() {
  return (
    <div className="pointer-events-none absolute top-0 right-0 h-[560px] w-[476px]">
      <svg viewBox="1109 124 476 560" className="absolute inset-0 h-full w-full" fill="none" stroke="#cf1d26" strokeWidth="2.600" aria-hidden="true">
        <path d="M1276 147h27v-22h26v22h96v188h-149zM1276 343h150v40h-150zM1271 430h157v44h-157zM1271 464h-54v28M1352 657h69v23h-69zM1402 657v23M1422 670h79v-28" />
      </svg>
      <div className="absolute top-[365px] right-[314px] flex h-[34px] w-[162px] items-center border-[3px] border-[#cf1d26] bg-white pl-[18px] font-['Liberation_Serif',serif] text-[14px] text-[#a3202c]">Selection Options</div>
      <div className="absolute top-[494px] right-[44px] flex h-[26px] w-[84px] items-center justify-center border-[3px] border-[#cf1d26] bg-white font-['Liberation_Serif',serif] text-[13px] whitespace-nowrap text-[#a3202c]">Tool Settings</div>
    </div>
  );
}

/* ---------- status bar ---------- */

const transport = [
  ["Go to start", "M2 3v10M14 3L9 8l5 5zM8 3L3 8l5 5z"],
  ["Previous key", "M7 3L2 8l5 5zM9.500 3v10M11.500 3v10M13.500 3v10"],
  ["Play", "M4 3l8 5-8 5z"],
  ["Next key", "M9 3l5 5-5 5zM6.500 3v10M4.500 3v10M2.500 3v10"],
  ["Go to end", "M14 3v10M2 3l5 5-5 5zM8 3l5 5-5 5z"],
];

function NavIcon({ kind }: { kind: number }) {
  return (
    <Ico className="size-4" box="0 0 18 18">
      {kind === 0 && <><circle cx="6" cy="7" r="4" fill="#eee" stroke="none" /><path d="M8 9l4 5M13 2v4M11 4h4M11 8h4" /></>}
      {kind === 1 && <><path d="M2 2h6v6H2zM10 2h6v6h-6zM2 10h6v6H2z" fill="#ddd" stroke="none" /><circle cx="11" cy="11" r="2.500" fill="#eee" /><path d="M13 13l3 3" /></>}
      {kind === 2 && <><path d="M2 5V2h3M13 2h3v3M2 13v3h3" stroke="#ddd" /><path d="M5 7l2-2h6v6l-2 2H5z" fill="#6aa860" stroke="#c8e0c0" strokeWidth="1" /></>}
      {kind === 3 && <><path d="M3 4h6v6H3zM10 1h6v6h-6zM10 9h6v6h-6z" fill="#ddd" stroke="#333" strokeWidth=".8" /><path d="M3 10h6v6H3z" fill="#6aa860" stroke="#333" strokeWidth=".8" /></>}
      {kind === 4 && <path d="M3 2l12 7-12 6 3-6z" stroke="#ccc" strokeWidth="1.200" />}
      {kind === 5 && <path d="M5 16l-4-6 2-.5L5.500 12V4.500h1.500V9V2.500h1.800V9V3h1.700v6.500V5h1.800l-.3 11z" fill="#f2f2f2" stroke="#333" strokeWidth=".5" />}
      {kind === 6 && <><path d="M8 2v6l5 4M8 8l-5 6" stroke="#eee" strokeWidth="1.800" /><path d="M12 5a5.500 5.500 0 11-8 1" stroke="#7ab870" /></>}
      {kind === 7 && <><path d="M2 2h10v10H2z" fill="#eee" stroke="none" /><path d="M10 10l6 6M5 5l6 6M5 9V5h4" stroke="#111" /><path d="M11 11h5v5h-5z" fill="#ccc" stroke="none" /></>}
      {kind !== 1 && kind !== 7 && <path d="M14 18l4-4v4z" fill="#fff" stroke="none" />}
    </Ico>
  );
}

function StatusBar() {
  return (
    <footer className="flex h-[43px] shrink-0 border-t border-[#222] bg-[#444] pt-[3px] text-[9px] text-[#cfcfcf]">
      <div className="flex w-[82px] shrink-0 flex-col gap-[2px] font-['Liberation_Mono',monospace] text-[10px] leading-4 text-black">
        <div className="h-[18px] border-2 border-[#f4f4f4] bg-[#dbbfc1]" />
        <div className="h-[19px] bg-white pl-[3px] whitespace-nowrap">Max to Physc:</div>
      </div>
      <div className="ml-[3px] min-w-0 flex-1 border-l-2 border-[#222] pl-[3px]">
        <div className="flex h-[19px] items-center">
          <div className={"h-[18px] flex-1 pl-1 leading-4 " + sunken + " bg-[#444]! text-[10px]"}>1 Object Selected</div>
          <Ico className="ml-[6px] mr-[3px] size-4" box="0 0 16 16"><path d="M5.500 8V5a2.500 2.500 0 015 0v3" stroke="#ddd" /><path d="M4 8h8v6H4z" fill="#efe6c4" stroke="none" /><path d="M8 9.500v3" stroke="#333" /></Ico>
          <Ico className="mx-[3px] size-4" box="0 0 16 16"><path d="M2 2h12v12H2z" fill="#eee" stroke="none" /><circle cx="8" cy="8" r="3.500" stroke="#222" strokeWidth="1" /><path d="M8 2v4M8 10v4M2 8h4M10 8h4" stroke="#222" strokeWidth="1" /></Ico>
          {[["X", "51.579"], ["Y", "148.15"], ["Z", "0.0"]].map(([k, v]) => (
            <React.Fragment key={k}>
              <label htmlFor={"pos" + k} className="ml-1 w-[11px] text-[10px]">{k}:</label>
              <input id={"pos" + k} defaultValue={v} className={"h-[17px] w-[47px] pl-0.5 text-[9px] text-[#1a1a1a] outline-none " + sunken} />
              <span className="w-[6px]" />
            </React.Fragment>
          ))}
          <div className={"ml-[6px] h-[18px] w-[84px] pl-1 leading-4 text-[10px] " + sunken + " bg-[#444]!"}>Grid = 0.0</div>
        </div>
        <div className="mt-[2px] flex h-[19px] items-center">
          <div className={"h-[18px] flex-1 pl-1 text-[10px] leading-4 " + sunken + " bg-[#444]!"}>Click or click-and-drag to select objects</div>
          <button aria-label="Adaptive degradation" className="ml-[3px] flex size-[18px] items-center justify-center bg-[#3b74c4]"><Ico className="size-3.5" box="0 0 14 14"><path d="M2 2h8v8H2zM4 4h8v8H4z" fill="#fff" stroke="#223" strokeWidth=".8" /><path d="M5 5h5v5H5z" fill="#dde" stroke="#445" strokeWidth=".8" /></Ico></button>
          <button className={"ml-[2px] h-[18px] w-[84px] pl-1 text-left text-[10px] leading-4 " + sunken + " bg-[#444]!"}>Add Time Tag</button>
        </div>
      </div>
      <button aria-label="Set keys" className={"ml-[3px] flex h-[37px] w-9 items-center justify-center " + raised}><Ico className="h-3 w-5" box="0 0 20 12"><circle cx="4" cy="6" r="3" stroke="#0c0c0c" strokeWidth="2" /><path d="M7 6h12M15 6v4M18 6v4" stroke="#0c0c0c" strokeWidth="2" /></Ico></button>
      <div className="ml-[3px] flex w-[39px] flex-col gap-px text-[9px] leading-3">
        <button className={"h-[18px] whitespace-nowrap " + raised}>Auto Key</button>
        <button className={"h-[18px] whitespace-nowrap " + raised}>Set Key</button>
      </div>
      <div className="ml-[3px] flex w-[97px] flex-col gap-[3px]">
        <div className="relative h-[17px] border border-[#222] bg-linear-to-b from-white to-[#c4c4c4] text-black">
          <select aria-label="Key set" className="block h-full w-full appearance-none bg-transparent pl-px text-[9px] outline-none"><option>Selected</option></select>
          <Caret className="absolute top-[5px] right-1" />
        </div>
        <div className="flex">
          <button aria-label="Tangent type" className="flex w-[22px] items-center"><Ico className="size-4" box="0 0 16 16"><path d="M1 11c3 3 4-9 6-9s0 12 3 9 2-7 5-7" stroke="#b05a7a" strokeWidth="1.200" /></Ico></button>
          <button className={"h-[17px] flex-1 text-[10px] leading-3 " + raised}>Key Filters...</button>
        </div>
      </div>
      <div className="ml-[6px] flex w-[99px] flex-col gap-[3px]">
        <div className="flex h-[17px] items-center justify-between">
          {transport.map(([n, d]) => <button key={n} aria-label={n}><Ico className="size-3.5" box="0 0 16 16"><path d={d} strokeWidth="1.300" fill="#8a8a8a" stroke="#e2e2e2" /></Ico></button>)}
        </div>
        <div className="flex h-[17px] items-center">
          <Ico className="size-3.5" box="0 0 16 16"><path d="M2 4v8M14 4v8M7 4L3 8l4 4zM9 4l4 4-4 4z" strokeWidth="1.300" stroke="#e2e2e2" /></Ico>
          <input aria-label="Current frame" defaultValue="0" className={"ml-1 h-[16px] w-[51px] pl-0.5 text-[9px] text-[#dedede] outline-none " + sunken} />
          <Spin />
          <Ico className="ml-1 size-4" box="0 0 16 16"><path d="M1 2h8v10H1z" fill="#cfe0f4" stroke="#24466e" strokeWidth="1" /><path d="M2 5h6M2 8h6" stroke="#24466e" /><circle cx="11.500" cy="11.500" r="3.500" fill="#eee" stroke="#222" strokeWidth="1" /></Ico>
        </div>
      </div>
      <div className="mr-[2px] ml-[6px] grid w-[76px] grid-cols-4 justify-items-center gap-y-[2px]">
        {[0, 1, 2, 3, 4, 5, 6, 7].map((k) => <button key={k} aria-label={"Viewport navigation " + (k + 1)} className="h-[18px]"><NavIcon kind={k} /></button>)}
      </div>
    </footer>
  );
}

/* ---------- task bar ---------- */

function TaskBar() {
  return (
    <div className="relative z-10 flex h-[26px] shrink-0 items-center border-t border-[#5b6b7c] bg-linear-to-r from-[#8ba4bf] via-[#b0cde9] via-15% to-[#b0cde9]">
      <button aria-label="Start" className="absolute -top-[4px] left-[7px] size-[30px]">
        <svg viewBox="0 0 30 30" className="size-[30px]" aria-hidden="true">
          <defs><radialGradient id="orb" cx=".5" cy=".9" r=".9"><stop offset="0" stopColor="#38d0f8" /><stop offset=".5" stopColor="#1a5c98" /><stop offset="1" stopColor="#8fb4d4" /></radialGradient></defs>
          <circle cx="15" cy="15" r="14.500" fill="url(#orb)" stroke="#234b72" strokeWidth=".8" />
          <path d="M7 10c2.500-2 4.500-2 7-.5L12.800 15c-2.500-1.500-4.500-1.500-7 0z" fill="#e8562a" /><path d="M15 10c2.500 1.300 5 1.300 7.500-.5L21 15c-2.500 1.700-4.500 1.700-7 .3z" fill="#8cc63f" />
          <path d="M5.500 16c2.500-1.500 4.500-1.500 7 0L11 21.500c-2-1.500-4.500-1.500-7 .2z" fill="#2f9be0" /><path d="M13.700 16.500c2.500 1.300 4.500 1.300 7-.3L19 22c-2.500 1.500-4.500 1.200-6.800 0z" fill="#fdc82f" />
        </svg>
      </button>
      <div className="ml-[48px] flex w-[78px] items-center justify-around">
        <Ico className="size-4" box="0 0 18 18"><circle cx="9" cy="10" r="5" stroke="#3d9be0" strokeWidth="2.600" /><path d="M5 10h9" stroke="#3d9be0" strokeWidth="2" /><path d="M2 14C0 17 5 15 10 11s6-9 4-9-5 1-7 3" stroke="#e3bf52" strokeWidth="1.500" /></Ico>
        <Ico className="size-4" box="0 0 18 18"><path d="M2 3h6l1 2h7v10H2z" fill="#f3dc8e" stroke="#b8963c" strokeWidth=".8" /><path d="M4 9h10v7h-2.500v-3.500h-5V16H4z" fill="#9fd0ee" stroke="#4f8ab0" strokeWidth=".8" /></Ico>
      </div>
      <div className="flex h-full gap-[2px]">
        {[0, 1, 2].map((i) => (
          <button key={i} aria-label={["PDF reader", "3ds Max", "Photoshop"][i]} className={i === 2 ? "flex w-[30px] items-center justify-center rounded-[2px] border border-[#5f7891] bg-linear-to-b from-[#e3edf7] to-[#b5cbe0]" : "flex w-9 items-center justify-center rounded-[2px] border border-[#5f7891] bg-linear-to-b from-[#f3f7fb] to-[#c3d5e6]"}>
            <Ico className="size-[14px]" box="0 0 16 16">
              {i === 0 && <><path d="M1 1h14v14H1z" fill="#f6f6f6" stroke="#b31e1e" strokeWidth="1" /><path d="M3.500 13C6 10 8 6 7.500 3.500 8 9 10 11 13.500 10.500 10 10 6 10.500 3.500 13z" stroke="#c01818" strokeWidth="1.200" /></>}
              {i === 1 && <><path d="M1 1h14v14H1z" fill="#2b3033" stroke="#111" strokeWidth="1" /><path d="M12 4C6 2.500 3.500 5 3.500 8.500S6 13 8.500 12.500 12.500 10 11.500 8 8 7.500 8 6M6.500 7c.5 2.500 3 1.500 3 3" stroke="#f0f0f0" strokeWidth="1.200" /></>}
              {i === 2 && <><path d="M0 0h16v16H0z" fill="#05395f" stroke="#0a6cae" strokeWidth="1" /><text x="8" y="11.500" fontSize="8.500" fontWeight="700" textAnchor="middle" fill="#35aef5" stroke="none" fontFamily="'Liberation Sans', sans-serif">Ps</text></>}
            </Ico>
          </button>
        ))}
        <span className="w-[3px] border-x border-[#7d95ad]" />
      </div>
      <div className="ml-auto flex h-full items-center gap-1 bg-linear-to-r from-[#b0cde9] to-[#89a2be] to-15% pl-7 text-[10px] text-white">
        <Ico className="mr-1 size-3" box="0 0 12 12"><path d="M2.500 8h7L6 4.500z" fill="#fff" stroke="none" /></Ico>
        <Ico className="size-4" box="0 0 16 16"><path d="M3 2v13" stroke="#fff" strokeWidth="1.800" /><path d="M4 3h5l1 1.500h4v6H9.500L8.500 9H4z" fill="#fff" stroke="#456" strokeWidth=".6" /></Ico>
        <Ico className="ml-0.5 size-4" box="0 0 16 16"><path d="M4 3h11v8H4z" fill="#6a7f95" stroke="#fff" strokeWidth="1.300" /><path d="M7 13.500h6M2 1v5h3" stroke="#fff" /></Ico>
        <Ico className="ml-0.5 size-4" box="0 0 16 16"><path d="M1 6h3l4-4v12l-4-4H1z" fill="#fff" stroke="#456" strokeWidth=".6" /><path d="M10 5q2 3 0 6M12.500 3q3.500 5 0 10" stroke="#fff" strokeWidth="1.200" /></Ico>
        <time className="mr-[7px] ml-3 whitespace-nowrap">2:06 PM</time>
        <span className="h-full w-3 border-l border-[#5f7891] bg-linear-to-b from-[#d2dfec] to-[#7d96b0]" />
      </div>
    </div>
  );
}

/* ---------- app ---------- */

export default function App() {
  return (
    <div className="flex h-screen min-h-[900px] flex-col overflow-hidden bg-[#636363] font-['Open_Sans','Noto_Sans',sans-serif] text-[9px] leading-3">
      <div className="relative min-h-0 flex-1">
        <BackWindow />
        <div className="absolute top-[15px] right-[9px] bottom-3 left-4 flex flex-col rounded-t-[6px] rounded-b-[4px] border border-[#1e2a38] bg-[#b4cfea] px-[5px] pb-[5px] shadow-[0_0_4px_#000]">
          <TitleBar />
          <AppLogo />
          <MenuBar />
          <div className="flex min-h-0 flex-1 flex-col bg-[#444]">
            <Toolbar />
            <Ribbon />
            <div className="relative flex min-h-0 flex-1">
              <div className="flex min-w-0 flex-1 flex-col pt-px">
                <main className="relative min-h-0 flex-1 border border-[#6b6224] bg-[#383838]">
                  <Scene />
                  <p className="absolute top-[3px] left-[3px] font-['Liberation_Sans',sans-serif] text-[9px] text-[#ddd]">[ + ] [ Perspective ] [ Realistic + Edged Faces ]</p>
                  <Caddy />
                </main>
                <Timeline />
              </div>
              <aside className="flex w-[307px] shrink-0 items-stretch gap-[8px] overflow-hidden border-b border-[#222] text-[9px] text-[#cfcfcf]">
                <ColumnA />
                <ColumnB />
                <div className="mt-[25px] -ml-[7px] flex w-1 shrink-0 flex-col justify-end bg-[#1a1a1a]"><span className="h-20 bg-[#cfcfcf]" /></div>
              </aside>
              <Notes />
            </div>
            <StatusBar />
          </div>
        </div>
      </div>
      <TaskBar />
    </div>
  );
}
